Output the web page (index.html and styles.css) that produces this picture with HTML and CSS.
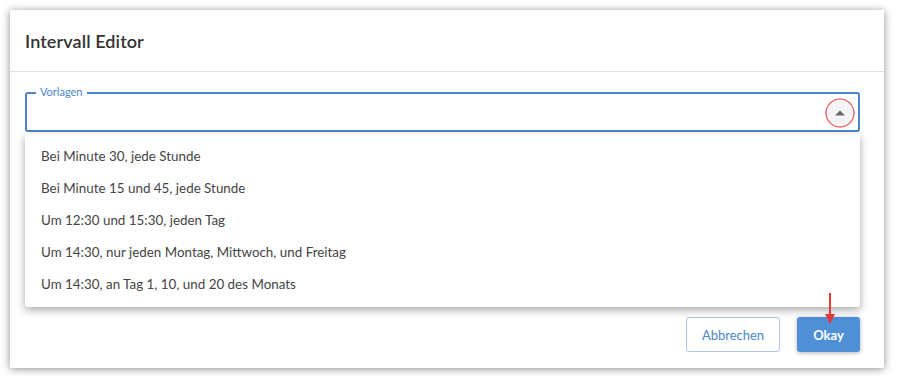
FILE: index.html
```html
<!DOCTYPE html>
<html lang="de">
<head>
<meta charset="utf-8">
<title>Intervall Editor</title>
<link rel="stylesheet" href="styles.css">
</head>
<body>
<div class="dialog">
  <div class="dialog-header">
    <h1 class="dialog-title">Intervall Editor</h1>
  </div>
  <div class="dialog-body">
    <div class="select-wrap">
      <div class="field">
        <span class="field-label">Vorlagen</span>
        <span class="field-spacer"></span>
        <span class="toggle">
          <svg class="toggle-svg" width="32" height="32" viewBox="0 0 32 32">
            <circle cx="16" cy="16" r="14" fill="#f5f5f5" stroke="#f04848" stroke-width="1.1"/>
            <path d="M11 18.5 L16 13.5 L21 18.5 Z" fill="#666"/>
          </svg>
        </span>
      </div>
      <ul class="menu">
        <li class="menu-item">Bei Minute 30, jede Stunde</li>
        <li class="menu-item">Bei Minute 15 und 45, jede Stunde</li>
        <li class="menu-item">Um 12:30 und 15:30, jeden Tag</li>
        <li class="menu-item">Um 14:30, nur jeden Montag, Mittwoch, und Freitag</li>
        <li class="menu-item">Um 14:30, an Tag 1, 10, und 20 des Monats</li>
      </ul>
    </div>
  </div>
  <div class="dialog-footer">
    <button class="btn btn-outline">Abbrechen</button>
    <span class="btn-holder">
      <button class="btn btn-primary">Okay</button>
      <svg class="annot-arrow" width="12" height="32" viewBox="0 0 12 32">
        <line x1="6" y1="0" x2="6" y2="24" stroke="#e53935" stroke-width="2"/>
        <path d="M1 21 L6 31 L11 21 Z" fill="#e53935"/>
      </svg>
    </span>
  </div>
</div>
</body>
</html>
```
FILE: styles.css
```css
* { box-sizing: border-box; }
html, body { margin: 0; padding: 0; background: #fff; }
body {
  font-family: Lato, "Open Sans", sans-serif;
  color: #444;
  width: 897px;
  height: 379px;
  overflow: hidden;
  padding: 10px 0 0 10px;
}
.dialog {
  width: 874px;
  height: 358px;
  background: #fff;
  box-shadow: 0 1px 8px rgba(0,0,0,0.45);
  display: flex;
  flex-direction: column;
}
.dialog-header {
  height: 62px;
  border-bottom: 1px solid #e0e0e0;
  display: flex;
  align-items: center;
  padding: 0 15px;
}
.dialog-title {
  margin: 0;
  font-size: 18px;
  font-weight: 600;
  color: #333;
  letter-spacing: 0.1px;
}
.dialog-body {
  flex: 1;
  padding: 20px 24px 0 15px;
}
.select-wrap {
  position: relative;
}
.field {
  position: relative;
  height: 40px;
  border: 2px solid #4a86c8;
  border-radius: 3px;
  display: flex;
  align-items: center;
  padding: 0 2px 0 12px;
}
.field-label {
  position: absolute;
  left: 9px;
  top: -9px;
  background: #fff;
  padding: 0 4px;
  font-size: 11px;
  line-height: 14px;
  color: #4a86c8;
}
.field-spacer { flex: 1; }
.toggle {
  display: flex;
  width: 32px;
  height: 32px;
  margin-top: 2px;
}
.menu {
  position: absolute;
  left: 0;
  right: 0;
  top: 42px;
  margin: 0;
  padding: 6px 0 7px;
  list-style: none;
  background: #fff;
  border-radius: 3px;
  box-shadow: 0 3px 8px rgba(0,0,0,0.35);
  z-index: 2;
}
.menu-item {
  height: 32px;
  line-height: 32px;
  padding: 0 16px;
  font-size: 13.4px;
  color: #444;
}
.dialog-footer {
  display: flex;
  justify-content: flex-end;
  gap: 17px;
  padding: 0 24px 16px 15px;
}
.btn {
  height: 35px;
  border-radius: 3px;
  font-family: Lato, "Open Sans", sans-serif;
  font-size: 13px;
  cursor: pointer;
}
.btn-outline {
  width: 94px;
  background: #fff;
  border: 1px solid #a9c8ea;
  color: #4a86c8;
}
.btn-holder { position: relative; display: flex; }
.btn-primary {
  width: 63px;
  background: #4f8fd6;
  border: none;
  color: #fff;
  font-weight: 700;
  box-shadow: 0 1px 4px rgba(0,0,0,0.3);
}
.annot-arrow {
  position: absolute;
  left: 27px;
  top: -24px;
  z-index: 3;
}
```
